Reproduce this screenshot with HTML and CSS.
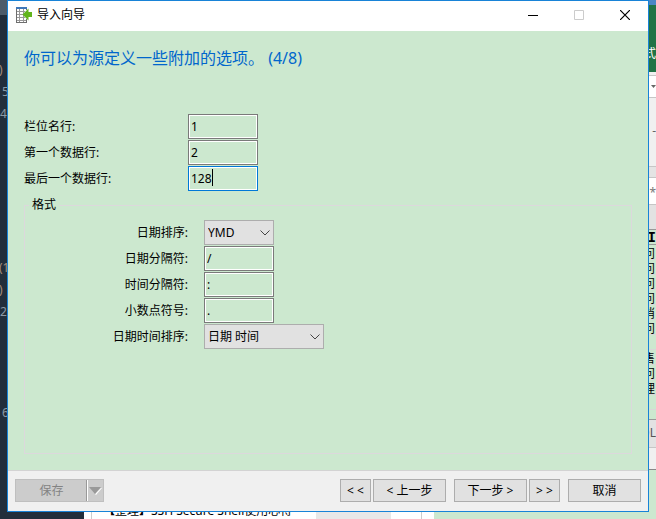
FILE: index.html
```
<!DOCTYPE html>
<html lang="zh-CN">
<head>
    <meta charset="UTF-8">
    <meta name="viewport" content="width=device-width, initial-scale=1.0">
    <title>导入向导</title>
    <link rel="stylesheet" href="styles.css">
</head>
<body>

    <!-- Windows behind the dialog -->
    <div class="desktop">
        <div class="editor">
            <div class="editor-tabs"></div>
            <div class="code">
                <div class="code-orange">)</div>
                <div class="code-indent">5</div>
                <div>4</div>
            </div>
            <div class="code code-middle">
                <div class="code-orange">(1</div>
                <div class="code-orange">)</div>
                <div>2)</div>
            </div>
            <div class="code code-last">
                <div class="code-indent">6</div>
            </div>
        </div>
        <div class="browser">
            <div class="browser-page">
                <a class="article" href="#">【整理】SSH Secure Shell使用心得</a>
                <div class="thumbnail"></div>
            </div>
        </div>
        <div class="sheet">
            <div class="sheet-title"></div>
            <div class="sheet-ribbon">式</div>
            <div class="sheet-space"></div>
            <div class="sheet-name">
                <svg width="5" height="3" viewBox="0 0 5 3"><path fill="#666" d="M0 0h5L2.5 3z"/></svg>
            </div>
            <div class="sheet-panel">-</div>
            <div class="sheet-strip"></div>
            <div class="sheet-formula">⁎</div>
            <div class="sheet-toolbar"></div>
            <div class="sheet-head">II</div>
            <div class="cell">问</div>
            <div class="cell">问</div>
            <div class="cell">问</div>
            <div class="cell">问</div>
            <div class="cell">消</div>
            <div class="cell">问</div>
            <div class="cell"></div>
            <div class="cell">售</div>
            <div class="cell">问</div>
            <div class="cell">理</div>
            <div class="cell"></div>
            <div class="sheet-tabs">QL</div>
            <div class="sheet-status"></div>
        </div>
    </div>

    <form class="dialog">
        <header class="titlebar">
            <svg class="app-icon" width="16" height="16" viewBox="0 0 16 16" shape-rendering="crispEdges">
                <path fill="#fff" d="M0 0h11v16H0z"/>
                <path fill="#999" d="M1 4h8v1H1zM1 7h6v1H1zM1 10h8v1H1zM1 13h9v1H1zM3 2h1v13H3zM7 2h1v13H7z"/>
                <path fill="#3f78b8" d="M0 0h11v2H0z"/>
                <path fill="#6e6e6e" d="M0 2h1v14H0zM10 2h1v1h-1zM10 12h1v4h-1zM0 15h11v1H0z"/>
                <path fill="#62b51d" shape-rendering="auto" d="M6.500 7.500 12.500 1.500V5H16v5h-3.500v3.500z"/>
            </svg>
            <h1 class="title">导入向导</h1>
            <button class="window-button" type="button" aria-label="最小化">
                <svg width="10" height="10" viewBox="0 0 10 10"><path stroke="#000" d="M0 5.5h10"/></svg>
            </button>
            <button class="window-button" type="button" aria-label="最大化" disabled>
                <svg width="10" height="10" viewBox="0 0 10 10"><path fill="none" stroke="#ccc" d="M.5.5h9v9h-9z"/></svg>
            </button>
            <button class="window-button" type="button" aria-label="关闭">
                <svg width="10" height="10" viewBox="0 0 10 10"><path stroke="#000" stroke-width="1.2" d="M0 0l10 10M10 0 0 10"/></svg>
            </button>
        </header>

        <main class="content">
            <h2 class="heading">你可以为源定义一些附加的选项。 (4/8)</h2>

            <div class="rows">
                <div class="row">
                    <label for="field-row">栏位名行:</label>
                    <input class="field" type="text" id="field-row" value="1">
                </div>
                <div class="row">
                    <label for="first-row">第一个数据行:</label>
                    <input class="field" type="text" id="first-row" value="2">
                </div>
                <div class="row">
                    <label for="last-row">最后一个数据行:</label>
                    <div class="field-box">
                        <input class="field field-active" type="text" id="last-row" value="128">
                        <span class="caret"></span>
                    </div>
                </div>
            </div>

            <fieldset class="formats">
                <legend>格式</legend>
                <div class="rows">
                    <div class="row">
                        <label for="date-order">日期排序:</label>
                        <div class="select-box">
                            <select id="date-order">
                                <option>YMD</option>
                            </select>
                            <svg class="chevron" width="10" height="6" viewBox="0 0 10 6"><path fill="none" stroke="#444" d="M.5.5 5 5l4.5-4.5"/></svg>
                        </div>
                    </div>
                    <div class="row">
                        <label for="date-separator">日期分隔符:</label>
                        <input class="field" type="text" id="date-separator" value="/">
                    </div>
                    <div class="row">
                        <label for="time-separator">时间分隔符:</label>
                        <input class="field" type="text" id="time-separator" value=":">
                    </div>
                    <div class="row">
                        <label for="decimal">小数点符号:</label>
                        <input class="field" type="text" id="decimal" value=".">
                    </div>
                    <div class="row">
                        <label for="datetime-order">日期时间排序:</label>
                        <div class="select-box select-wide">
                            <select id="datetime-order">
                                <option>日期 时间</option>
                            </select>
                            <svg class="chevron" width="10" height="6" viewBox="0 0 10 6"><path fill="none" stroke="#444" d="M.5.5 5 5l4.5-4.5"/></svg>
                        </div>
                    </div>
                </div>
            </fieldset>
        </main>

        <footer class="footer">
            <div class="save">
                <button class="save-main" type="button" disabled>保存</button>
                <button class="save-menu" type="button" aria-label="更多" disabled>
                    <svg width="13" height="8" viewBox="0 0 13 8">
                        <path fill="#fff" d="M12 1h1L7 8 6 7z"/>
                        <path fill="#999" d="M0 0h12L6 7z"/>
                    </svg>
                </button>
            </div>
            <div class="steps">
                <button class="button button-small" type="button">&lt; &lt;</button>
                <button class="button" type="button">&lt; 上一步</button>
            </div>
            <div class="steps">
                <button class="button" type="button">下一步 &gt;</button>
                <button class="button button-small" type="button">&gt; &gt;</button>
            </div>
            <button class="button" type="button">取消</button>
        </footer>
    </form>

</body>
</html>
```

FILE: styles.css
```
* {
    box-sizing: border-box;
}
html,
body {
    height: 100%;
}
body {
    margin: 0;
    overflow: hidden;
    position: relative;
    font-family: "Noto Sans", "Noto Sans CJK SC", sans-serif;
    font-size: 12px;
    line-height: 16px;
    color: #000;
}
button,
input,
select {
    font: inherit;
    color: inherit;
    margin: 0;
    padding: 0;
    border-radius: 0;
}

/* Desktop */
.desktop {
    display: flex;
    height: 100%;
}
.editor {
    width: 84px;
    background-color: #222e3b;
    color: #8d9aa5;
}
.editor-tabs {
    height: 15px;
    background-color: #4c5b69;
}
.code {
    padding-top: 44px;
    line-height: 22px;
}
.code-middle {
    padding-top: 132px;
}
.code-last {
    padding-top: 79px;
}
.code-orange {
    color: #a98f7c;
    text-indent: -1px;
}
.code-indent {
    padding-left: 2px;
}
.browser {
    flex: 1;
    background-color: #fff;
    padding: 0 12px 0 7px;
}
.browser-page {
    display: flex;
    height: 100%;
    align-items: flex-end;
    border-left: 1px solid #ccc;
    border-right: 1px solid #ccc;
    padding-left: 11px;
}
.article {
    flex: 1;
    color: #000;
    text-decoration: none;
    white-space: nowrap;
}
.thumbnail {
    width: 75px;
    height: 14px;
    margin-right: 30px;
    background-color: #e8e8e8;
}
.sheet {
    width: 222px;
    background-color: #cce8cf;
    text-align: right;
}
.sheet-title {
    height: 5px;
    background-color: #4a86c5;
}
.sheet-ribbon {
    height: 67px;
    padding-top: 41px;
    background-color: #217346;
    color: #fff;
}
.sheet-space {
    height: 3px;
    background-color: #f0f0f0;
}
.sheet-name {
    display: flex;
    height: 23px;
    align-items: center;
    justify-content: flex-end;
    background-color: #fff;
    border-top: 1px solid #c6c6c6;
    border-bottom: 1px solid #c6c6c6;
}
.sheet-panel {
    height: 68px;
    padding-top: 25px;
    background-color: #f0f0f0;
    color: #666;
}
.sheet-strip {
    height: 12px;
    background-color: #e4e4e4;
    border-top: 1px solid #c6c6c6;
    border-bottom: 1px solid #c6c6c6;
}
.sheet-formula {
    height: 26px;
    background-color: #fff;
    color: #777;
}
.sheet-toolbar {
    height: 26px;
    background-color: #e2e2e2;
    border-top: 1px solid #c6c6c6;
    border-bottom: 1px solid #999;
}
.sheet-head {
    height: 15px;
    line-height: 16px;
    font-family: "Liberation Mono", monospace;
    font-size: 14px;
    font-weight: bold;
    border-bottom: 1px solid #999;
}
.cell {
    height: 15px;
    line-height: 18px;
    padding-right: 1px;
    border-bottom: 1px solid #d8d8d8;
}
.sheet-tabs {
    height: 29px;
    margin-top: 9px;
    line-height: 26px;
    background-color: #e2e2e2;
    border-top: 1px solid #999;
    border-bottom: 1px solid #c6c6c6;
    color: #555;
}
.sheet-status {
    height: 22px;
    background-color: #f0f0f0;
    border-bottom: 1px solid #888;
}

/* Dialog */
.dialog {
    position: absolute;
    top: 0;
    right: 7px;
    bottom: 7px;
    left: 7px;
    display: flex;
    flex-direction: column;
    border: 1px solid #1883d7;
    background-color: #cce8cf;
}
.titlebar {
    display: flex;
    height: 30px;
    align-items: center;
    padding: 0 0 2px 8px;
    background-color: #fff;
}
.title {
    flex: 1;
    margin: 0 0 0 5px;
    font-size: 12px;
    font-weight: normal;
}
.window-button {
    display: flex;
    width: 46px;
    height: 28px;
    align-items: center;
    justify-content: center;
    border: none;
    background-color: transparent;
}
.content {
    display: flex;
    flex: 1;
    flex-direction: column;
    padding: 15px 16px 16px;
}
.heading {
    margin: 0 0 44px;
    font-size: 16px;
    font-weight: normal;
    line-height: 24px;
    color: #0066cc;
}
.rows {
    display: flex;
    flex-direction: column;
    gap: 1px;
}
.row {
    display: flex;
    height: 25px;
    align-items: center;
}
.row label {
    width: 164px;
}
.field {
    width: 70px;
    height: 25px;
    padding: 0 2px;
    border: 1px solid #7a7a7a;
    box-shadow: inset 0 0 0 1px #fff;
    background-color: #cce8cf;
    outline: none;
}
.field-active {
    border-color: #0078d7;
}
.field-box {
    position: relative;
}
.field-box .field {
    display: block;
}
.caret {
    position: absolute;
    top: 3px;
    left: 24px;
    width: 1px;
    height: 17px;
    background-color: #000;
}
.formats {
    flex: 1;
    margin: 6px 0 0;
    padding: 7px 0 0;
    border: 1px solid #dcd8dc;
}
.formats legend {
    margin-left: 4px;
    padding: 0 3px;
}
.formats .row {
    gap: 16px;
}
.formats .row label {
    width: 163px;
    text-align: right;
}
.select-box {
    position: relative;
    width: 70px;
}
.select-wide {
    width: 120px;
}
.select-box select {
    display: block;
    width: 100%;
    height: 25px;
    padding: 0 3px;
    appearance: none;
    border: 1px solid #adadad;
    background-color: #e1e1e1;
}
.chevron {
    position: absolute;
    top: 10px;
    right: 4px;
    pointer-events: none;
}

/* Footer buttons */
.footer {
    display: flex;
    height: 41px;
    gap: 8px;
    padding: 8px 7px;
    border-top: 1px solid #d3d3d3;
    background-color: #f0f0f0;
}
.steps {
    display: flex;
    gap: 2px;
}
.button {
    width: 73px;
    height: 23px;
    border: 1px solid #adadad;
    background-color: #e1e1e1;
}
.button-small {
    width: 31px;
}
.save {
    display: flex;
    width: 89px;
    height: 23px;
    margin-right: auto;
    border: 1px solid #bfbfbf;
    background-color: #ccc;
    color: #838383;
}
.save button {
    border: none;
    background-color: transparent;
}
.save-main {
    flex: 1;
}
.save-menu {
    display: flex;
    width: 16px;
    align-items: center;
    justify-content: center;
    box-shadow: inset 1px 0 0 #fff, -1px 0 0 #999;
}
```
